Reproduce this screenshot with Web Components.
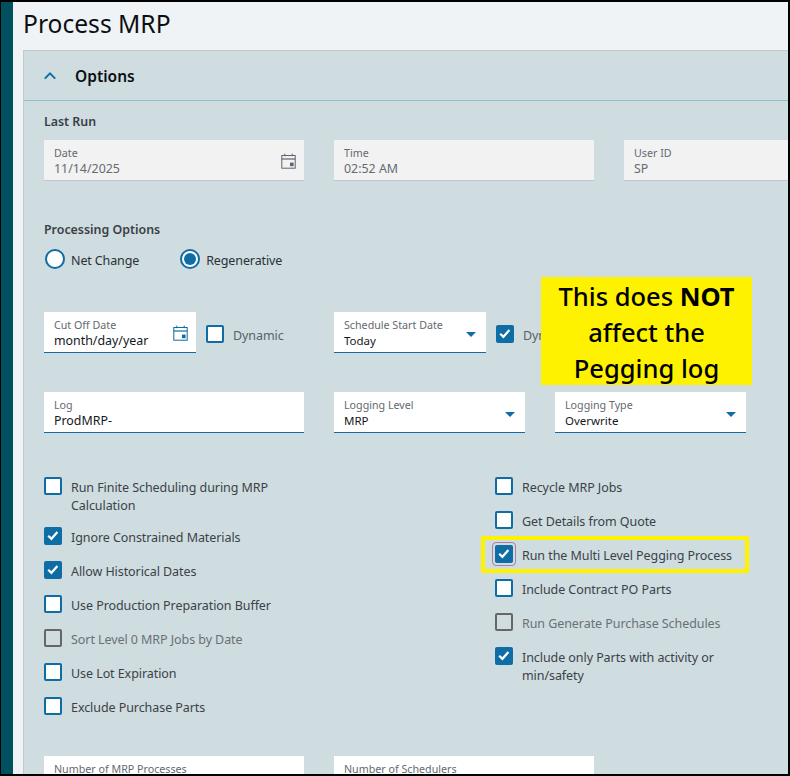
<!DOCTYPE html>
<html><head><meta charset="utf-8"><style>
html,body{margin:0;padding:0;background:#000;}
body{width:790px;height:776px;overflow:hidden;font-family:"Noto Sans","Open Sans",sans-serif;}
</style></head><body>
<mrp-app></mrp-app>
<script>
const FONT='"Noto Sans","Open Sans",sans-serif';
const cal=c=>`<svg width="15" height="16" viewBox="0 0 15 16" fill="none" stroke="${c}" stroke-width="1"><rect x=".8" y="2.5" width="13.4" height="12.7"/><path d="M.8 6h13.4" stroke-width="1.2"/><path d="M3.8 .6v2.6M11.2 .6v2.6"/><rect x="9" y="9.6" width="3.6" height="3.6" fill="${c}" stroke="none"/></svg>`;
class MrpField extends HTMLElement{
  connectedCallback(){
    const r=this.attachShadow({mode:'open'});
    const ro=this.hasAttribute('readonly'),t=this.getAttribute('type')||'text',w=this.getAttribute('width');
    const icon=t==='date'?`<span class="ic">${cal(ro?'#5c6670':'#0e6da4')}</span>`:t==='select'?`<span class="arrow"></span>`:'';
    r.innerHTML=`<style>
    :host{display:block;flex:none;box-sizing:border-box;width:${w}px;height:41px;background:${ro?'#f2f2f2':'#fff'};border-bottom:1px solid ${ro?'#c3c7ca':'#0e6da4'};position:relative;padding:6px 10px 0;font-family:${FONT};}
    .l{font-size:10.7px;line-height:14px;color:#646a70;white-space:nowrap;}
    .v{margin-top:1px;font-size:${t==='select'?'11.5px':'12.4px'};line-height:16px;color:${ro?'#646a70':'#15181b'};white-space:nowrap;}
    .ic{position:absolute;right:8px;top:13px;line-height:0;}
    .arrow{position:absolute;right:10px;top:20px;width:0;height:0;border-left:5px solid transparent;border-right:5px solid transparent;border-top:5px solid #0e6da4;}
    </style><div class="l">${this.getAttribute('label')}</div><div class="v">${this.getAttribute('value')||''}</div>${icon}`;
  }
}
customElements.define('mrp-field',MrpField);
class MrpCheck extends HTMLElement{
  connectedCallback(){
    const r=this.attachShadow({mode:'open'});
    const ch=this.hasAttribute('checked'),dis=this.hasAttribute('disabled'),foc=this.hasAttribute('focus');
    const lc=this.getAttribute('label-color');
    r.innerHTML=`<style>
    :host{display:flex;align-items:flex-start;gap:9px;font-family:${FONT};font-size:12.5px;letter-spacing:-.07px;line-height:18px;color:${lc||(dis?'#6b7074':'#3b4248')};}
    .t{margin:2px 0 -2px;}
    .b{flex:none;position:relative;box-sizing:border-box;width:18px;height:18px;border-radius:2px;border:2px solid ${dis?'#666':'#0e6da4'};background:${ch?'#0e6da4':dis?'transparent':'#fff'};}
    .b.f::after{content:"";position:absolute;inset:-5px;border:1px solid #b07aa8;border-radius:4px;}
    svg{position:absolute;left:0;top:0;}
    </style><span class="b ${foc?'f':''}">${ch?'<svg width="14" height="14" viewBox="0 0 14 14" fill="none" stroke="#fff" stroke-width="2.2"><path d="M2.2 6.8 5.4 9.8 11.4 3"/></svg>':''}</span><span class="t"><slot></slot></span>`;
  }
}
customElements.define('mrp-check',MrpCheck);
class MrpRadio extends HTMLElement{
  connectedCallback(){
    const r=this.attachShadow({mode:'open'});
    const ch=this.hasAttribute('checked');
    r.innerHTML=`<style>
    :host{display:inline-flex;align-items:flex-start;gap:6px;font-family:${FONT};font-size:12.5px;letter-spacing:-.12px;line-height:20px;color:#2a3035;}
    .t{margin:2px 0 -2px;}
    .o{box-sizing:border-box;width:20px;height:20px;border-radius:50%;border:2px solid #0e6da4;background:#fff;display:flex;align-items:center;justify-content:center;}
    .o i{display:block;width:12px;height:12px;border-radius:50%;background:#0e6da4;}
    </style><span class="o">${ch?'<i></i>':''}</span><span class="t"><slot></slot></span>`;
  }
}
customElements.define('mrp-radio',MrpRadio);
class MrpApp extends HTMLElement{
  connectedCallback(){
    const r=this.attachShadow({mode:'open'});
    r.innerHTML=`<style>
    :host{display:block;width:790px;height:776px;box-sizing:border-box;border:solid #000;border-width:2px 2px 2px 1px;overflow:hidden;font-family:${FONT};position:relative;}
    .shell{display:flex;height:100%;}
    .rail{flex:none;width:12px;background:#00505f;}
    .main{flex:1;min-width:0;background:#eff3f6;display:flex;flex-direction:column;padding-left:10px;overflow:hidden;}
    h1{margin:0;font-weight:400;font-size:24.6px;line-height:30px;height:48px;padding-top:7px;box-sizing:border-box;color:#0c0f12;}
    .panel{flex:1;background:#cfdce0;border-left:1px solid #c4c8c9;border-top:1px solid #c4c8c9;overflow:hidden;}
    .head{display:flex;align-items:center;gap:19px;height:49px;padding-left:20px;border-bottom:1px solid #8cbfd2;}
    .head b{font-weight:600;font-size:15.5px;color:#0c0f12;}
    .body{padding:12px 0 0 20px;}
    h2{margin:0;font-weight:600;font-size:12.4px;line-height:18px;color:#3a4047;}
    .row{display:flex;align-items:flex-start;}
    .cols{display:grid;grid-template-columns:451px 1fr;}
    .stack{display:flex;flex-direction:column;gap:16px;}
    .hl{position:relative;}
    .hl::before{content:"";position:absolute;left:-14px;top:-9px;width:268px;height:37px;border:4px solid #fff200;box-sizing:border-box;pointer-events:none;}
    .note{position:absolute;left:540px;top:275px;width:211px;height:108px;box-sizing:border-box;padding-top:1px;background:#fff200;color:#000;font-family:"Noto Sans","Open Sans",sans-serif;font-size:25.5px;font-weight:500;line-height:36px;text-align:center;}
    .note b{font-weight:700;}
    </style>
    <div class="shell"><div class="rail"></div><div class="main">
      <h1>Process MRP</h1>
      <section class="panel">
        <div class="head"><svg width="12" height="9" viewBox="0 0 12 9" fill="none" stroke="#0e6da4" stroke-width="2"><path d="M.8 7.6 6 2.4 11.2 7.6"/></svg><b>Options</b></div>
        <div class="body">
          <h2>Last Run</h2>
          <div class="row" style="margin-top:9px;gap:30px">
            <mrp-field readonly type="date" width="260" label="Date" value="11/14/2025"></mrp-field>
            <mrp-field readonly width="260" label="Time" value="02:52 AM"></mrp-field>
            <mrp-field readonly width="260" label="User ID" value="SP"></mrp-field>
          </div>
          <h2 style="margin-top:40px">Processing Options</h2>
          <div class="row" style="margin-top:10px;margin-left:1px;gap:41px"><mrp-radio>Net Change</mrp-radio><mrp-radio checked>Regenerative</mrp-radio></div>
          <div class="row" style="margin-top:43px">
            <mrp-field type="date" width="152" label="Cut Off Date" value="month/day/year"></mrp-field>
            <mrp-check style="margin:13px 0 0 10px;width:128px" label-color="#5a6167">Dynamic</mrp-check>
            <mrp-field type="select" width="152" label="Schedule Start Date" value="Today"></mrp-field>
            <mrp-check checked style="margin:13px 0 0 10px" label-color="#5a6167">Dynamic</mrp-check>
          </div>
          <div class="row" style="margin-top:39px">
            <mrp-field width="260" label="Log" value="ProdMRP-"></mrp-field>
            <mrp-field type="select" width="191" label="Logging Level" value="MRP" style="margin-left:30px"></mrp-field>
            <mrp-field type="select" width="191" label="Logging Type" value="Overwrite" style="margin-left:30px"></mrp-field>
          </div>
          <div class="cols" style="margin-top:44px">
            <div class="stack">
              <mrp-check style="width:240px;margin-bottom:-2px">Run Finite Scheduling during MRP Calculation</mrp-check>
              <mrp-check checked>Ignore Constrained Materials</mrp-check>
              <mrp-check checked>Allow Historical Dates</mrp-check>
              <mrp-check>Use Production Preparation Buffer</mrp-check>
              <mrp-check disabled>Sort Level 0 MRP Jobs by Date</mrp-check>
              <mrp-check>Use Lot Expiration</mrp-check>
              <mrp-check>Exclude Purchase Parts</mrp-check>
            </div>
            <div class="stack">
              <mrp-check>Recycle MRP Jobs</mrp-check>
              <mrp-check>Get Details from Quote</mrp-check>
              <div class="hl"><mrp-check checked focus>Run the Multi Level Pegging Process</mrp-check></div>
              <mrp-check>Include Contract PO Parts</mrp-check>
              <mrp-check disabled>Run Generate Purchase Schedules</mrp-check>
              <mrp-check checked style="width:240px">Include only Parts with activity or min/safety</mrp-check>
            </div>
          </div>
          <div class="row" style="margin-top:41px;gap:30px">
            <mrp-field width="260" label="Number of MRP Processes" value=""></mrp-field>
            <mrp-field width="260" label="Number of Schedulers" value=""></mrp-field>
          </div>
        </div>
      </section>
    </div></div>
    <div class="note">This does <b>NOT</b><br>affect the<br>Pegging log</div>`;
  }
}
customElements.define('mrp-app',MrpApp);
</script>
</body></html>
